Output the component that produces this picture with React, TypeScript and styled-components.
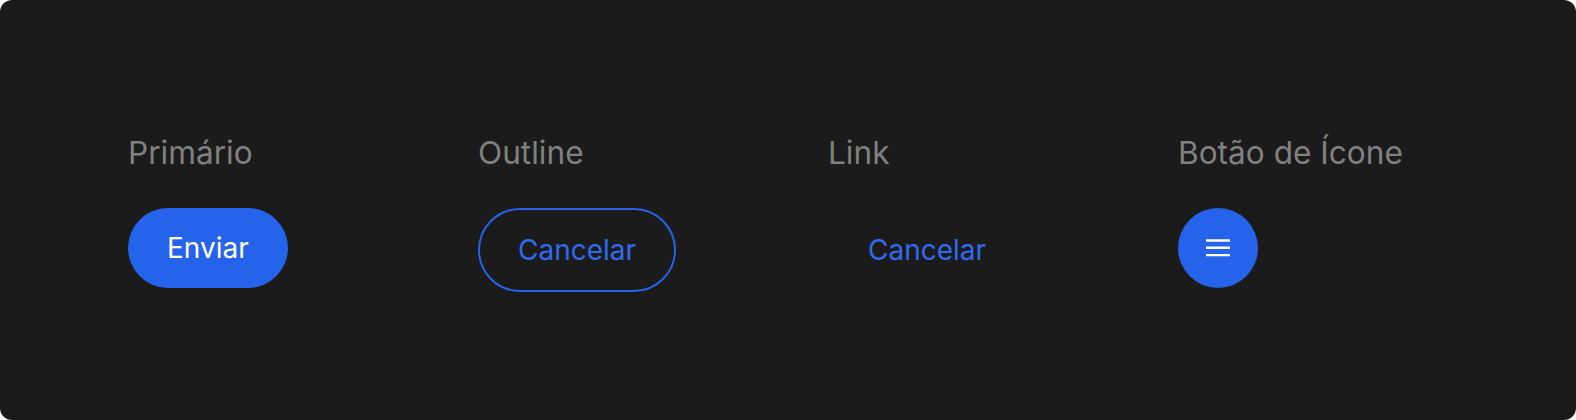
import React from "react";
import styled, { createGlobalStyle, css } from "styled-components";

const Global = createGlobalStyle`
  html, body { margin: 0; padding: 0; background: #ffffff; }
  body { font-family: Inter, "Noto Sans", "Liberation Sans", sans-serif; }
  * { box-sizing: border-box; }
`;

const Card = styled.section`
  width: 1576px;
  height: 420px;
  background: #1b1b1b;
  border-radius: 12px;
  padding: 134px 128px 0;
`;

const Grid = styled.div`
  display: grid;
  grid-template-columns: repeat(4, 270px);
  column-gap: 80px;
  align-items: start;
`;

const Column = styled.div`
  display: flex;
  flex-direction: column;
  align-items: flex-start;
  gap: 36px;
`;

const Label = styled.span`
  font-size: 31.6px;
  line-height: 38px;
  color: #808080;
  font-weight: 400;
`;

type Variant = "primary" | "outline" | "link";

const Button = styled.button<{ $variant: Variant }>`
  font-family: inherit;
  font-size: 28px;
  line-height: 40px;
  font-weight: 400;
  border-radius: 999px;
  cursor: pointer;
  background: transparent;
  color: #2f6bef;
  border: 2px solid transparent;
  padding: 20px 38px;
  ${(p) =>
    p.$variant === "primary" &&
    css`
      border: none;
      padding: 20px 39px;
      background: #2563eb;
      color: #ffffff;
    `}
  ${(p) =>
    p.$variant === "outline" &&
    css`
      border-color: #2563eb;
    `}
`;

const IconButton = styled.button`
  width: 80px;
  height: 80px;
  border-radius: 50%;
  border: none;
  background: #2563eb;
  display: flex;
  align-items: center;
  justify-content: center;
  padding: 0;
  cursor: pointer;
`;

const MenuIcon = () => (
  <svg width="24" height="18" viewBox="0 0 24 18" fill="none">
    <path d="M0 1.5h24M0 8.8h24M0 16.1h24" stroke="#ffffff" strokeWidth="2.4" />
  </svg>
);

export default function App() {
  return (
    <>
      <Global />
      <Card>
        <Grid>
          <Column>
            <Label>Primário</Label>
            <Button $variant="primary">Enviar</Button>
          </Column>
          <Column>
            <Label>Outline</Label>
            <Button $variant="outline">Cancelar</Button>
          </Column>
          <Column>
            <Label>Link</Label>
            <Button $variant="link">Cancelar</Button>
          </Column>
          <Column>
            <Label>Botão de Ícone</Label>
            <IconButton aria-label="Menu">
              <MenuIcon />
            </IconButton>
          </Column>
        </Grid>
      </Card>
    </>
  );
}
